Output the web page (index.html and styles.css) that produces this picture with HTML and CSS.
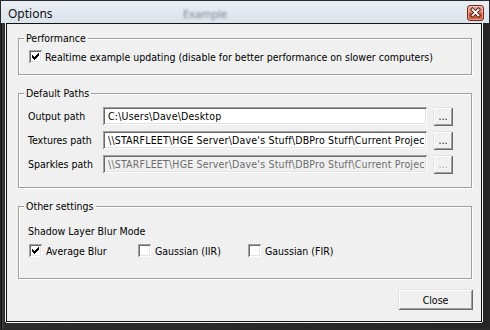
FILE: index.html
```html
<!DOCTYPE html>
<html lang="en">
<head>
<meta charset="utf-8">
<title>Options</title>
<link rel="stylesheet" href="styles.css">
</head>
<body>
<div class="window">
  <div class="titlebar">
    <span class="title">Options</span>
    <span class="ghost">Example</span>
    <button class="close" aria-label="Close">
      <svg width="17" height="16" viewBox="0 0 17 16">
        <path d="M5.5 4.5 L11.5 10.5 M11.5 4.5 L5.5 10.5" stroke="#4a1a10" stroke-width="3.6" stroke-linecap="square" fill="none"/>
        <path d="M5.5 4.5 L11.5 10.5 M11.5 4.5 L5.5 10.5" stroke="#ffffff" stroke-width="1.8" stroke-linecap="square" fill="none"/>
      </svg>
    </button>
  </div>
  <div class="client">
    <section class="group group-perf">
      <div class="legend">Performance</div>
      <label class="check-row">
        <span class="box"><svg width="13" height="13" viewBox="0 0 13 13"><path d="M3 5h1v3h-1zM4 6h1v3h-1zM5 7h1v3h-1zM6 6h1v3h-1zM7 5h1v3h-1zM8 4h1v3h-1zM9 3h1v3h-1z" fill="#000"/></svg></span>
        <span>Realtime example updating (disable for better performance on slower computers)</span>
      </label>
    </section>

    <section class="group group-paths">
      <div class="legend">Default Paths</div>
      <div class="paths">
        <div class="path-row">
          <span class="lbl">Output path</span>
          <input class="field" type="text" value="C:\Users\Dave\Desktop" readonly>
          <button class="btn browse">...</button>
        </div>
        <div class="path-row">
          <span class="lbl">Textures path</span>
          <input class="field" type="text" value="\\STARFLEET\HGE Server\Dave's Stuff\DBPro Stuff\Current Projects\Sparkle Studio\Textures" readonly>
          <button class="btn browse">...</button>
        </div>
        <div class="path-row">
          <span class="lbl">Sparkles path</span>
          <input class="field" type="text" value="\\STARFLEET\HGE Server\Dave's Stuff\DBPro Stuff\Current Projects\Sparkle Studio\Sparkles" disabled>
          <button class="btn browse" disabled>...</button>
        </div>
      </div>
    </section>

    <section class="group group-other">
      <div class="legend">Other settings</div>
      <div class="caption">Shadow Layer Blur Mode</div>
      <div class="options">
        <label class="check">
          <span class="box"><svg width="13" height="13" viewBox="0 0 13 13"><path d="M3 5h1v3h-1zM4 6h1v3h-1zM5 7h1v3h-1zM6 6h1v3h-1zM7 5h1v3h-1zM8 4h1v3h-1zM9 3h1v3h-1z" fill="#000"/></svg></span>
          <span>Average Blur</span>
        </label>
        <label class="check">
          <span class="box"></span>
          <span>Gaussian (IIR)</span>
        </label>
        <label class="check">
          <span class="box"></span>
          <span>Gaussian (FIR)</span>
        </label>
      </div>
    </section>

    <div class="footer">
      <button class="btn close-btn">Close</button>
    </div>
  </div>
</div>
</body>
</html>
```

FILE: styles.css
```css
html, body {
  margin: 0;
  padding: 0;
}

body {
  width: 490px;
  height: 330px;
  overflow: hidden;
  background: #1f1f1f;
  font-family: "DejaVu Sans Condensed", "DejaVu Sans", sans-serif;
  font-stretch: condensed;
  font-size: 10.5px;
  color: #000;
}

.window {
  box-sizing: border-box;
  width: 490px;
  height: 330px;
  display: flex;
  flex-direction: column;
  border: 1px solid #2a2a2a;
  background: linear-gradient(to right, #0f0f0f 0, #0f0f0f 1px, #4a4a4a 1px, #2c2c2c 3px, #262626 100%);
}

.titlebar {
  position: relative;
  height: 22px;
  flex: none;
  display: flex;
  align-items: center;
  background: linear-gradient(to bottom, #e9eef4 0%, #e2e8ef 50%, #dbe3ec 100%);
}

.title {
  font-family: "Noto Sans", "Open Sans", sans-serif;
  font-stretch: normal;
  font-size: 12px;
  color: #111;
  padding-left: 7px;
  margin-top: 3px;
}

.ghost {
  position: absolute;
  left: 182px;
  top: 5px;
  font-family: "Noto Sans", sans-serif;
  font-stretch: normal;
  font-size: 11px;
  color: rgba(40, 50, 60, 0.55);
  filter: blur(1.3px);
}

.close {
  position: absolute;
  left: 466px;
  top: 4px;
  width: 17px;
  height: 16px;
  padding: 0;
  margin: 0;
  border: 1px solid #6e2b1e;
  border-radius: 3px;
  background: linear-gradient(to bottom, #eab0a0 0%, #df8670 45%, #c94d33 55%, #d6694d 100%);
  box-shadow: inset 0 0 0 1px rgba(255, 220, 210, 0.45);
  display: flex;
  align-items: center;
  justify-content: center;
}

.close svg {
  display: block;
  margin: -1px;
}

.client {
  flex: 1;
  margin: 0 7px 7px 5px;
  border: 1px solid #131313;
  background: #f0f0f0;
  box-shadow: -1px 0 0 #f6f6f6, 1px 0 0 #f6f6f6, 0 1px 0 #f6f6f6;
  display: flex;
  flex-direction: column;
}

.group {
  margin: 0 9px 0 11px;
  border: 1px solid #a0a0a0;
  box-shadow: inset 1px 1px 0 #fff, 1px 1px 0 #fff;
}

.group-perf {
  margin-top: 14px;
  padding-bottom: 10px;
}

.group-paths {
  margin-top: 18px;
  padding-bottom: 14px;
}

.group-other {
  margin-top: 18px;
  padding-bottom: 20px;
}

.legend {
  width: max-content;
  margin: -7px 0 -3px 5px;
  padding: 0 2px 0 2px;
  line-height: 13px;
  height: 13px;
  background: #f0f0f0;
}

.check-row {
  display: flex;
  align-items: center;
  gap: 3px;
  height: 15px;
  margin-top: 7px;
  padding-left: 10px;
  white-space: nowrap;
}

.box {
  flex: none;
  width: 13px;
  height: 13px;
  background: #fff;
  box-shadow:
    inset 1px 1px 0 #a0a0a0,
    inset -1px -1px 0 #fff,
    inset 2px 2px 0 #696969,
    inset -2px -2px 0 #e3e3e3;
}

.box svg {
  display: block;
}

.paths {
  display: flex;
  flex-direction: column;
  gap: 6px;
  padding: 10px 0 0 9px;
}

.path-row {
  display: flex;
  align-items: center;
  height: 18px;
}

.lbl {
  width: 75px;
  flex: none;
  white-space: nowrap;
}

.field {
  box-sizing: border-box;
  width: 324px;
  height: 18px;
  margin: 0;
  padding: 0 3px 0 5px;
  border: 0;
  outline: none;
  background: #fff;
  font: inherit;
  letter-spacing: 0.2px;
  color: #000;
  box-shadow:
    inset 1px 1px 0 #a0a0a0,
    inset -1px -1px 0 #fff,
    inset 2px 2px 0 #696969,
    inset -2px -2px 0 #e3e3e3;
}

.field:disabled {
  background: #f0f0f0;
  color: #6d6d6d;
  -webkit-text-fill-color: #6d6d6d;
  opacity: 1;
}

.btn {
  box-sizing: border-box;
  margin: 0;
  padding: 0;
  border: 0;
  background: #f0f0f0;
  font: inherit;
  color: #000;
  box-shadow:
    inset 1px 1px 0 #e3e3e3,
    inset -1px -1px 0 #696969,
    inset 2px 2px 0 #fff,
    inset -2px -2px 0 #a0a0a0;
}

.browse {
  width: 20px;
  height: 19px;
  margin-left: 6px;
  line-height: 16px;
}

.browse:disabled {
  color: #a0a0a0;
  text-shadow: 1px 1px 0 #fff;
}

.caption {
  margin-top: 15px;
  padding-left: 9px;
  line-height: 13px;
  height: 13px;
}

.options {
  display: flex;
  margin-top: 5px;
  padding-left: 10px;
  height: 15px;
}

.check {
  display: flex;
  align-items: center;
  gap: 4px;
  width: 109px;
  white-space: nowrap;
}

.check + .check {
  width: 110px;
}

.footer {
  display: flex;
  justify-content: flex-end;
  margin-top: 10px;
  padding-right: 8px;
}

.close-btn {
  width: 75px;
  height: 21px;
}
```
